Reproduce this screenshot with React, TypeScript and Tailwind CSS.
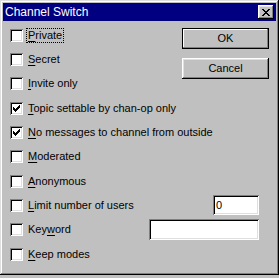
import type { ReactNode } from "react";

const font = { fontFamily: "'Liberation Sans', Arial, sans-serif" };

function U({ children }: { children: ReactNode }) {
  return <span className="underline underline-offset-[2px]">{children}</span>;
}

function Box({ checked }: { checked?: boolean }) {
  return (
    <div className="relative h-[13px] w-[13px] shrink-0 bg-white shadow-[inset_1px_1px_#808080,inset_-1px_-1px_#fff,inset_2px_2px_#000,inset_-2px_-2px_#dfdfdf]">
      {checked && (
        <svg width="7" height="7" viewBox="0 0 7 7" className="absolute left-[3px] top-[3px]" shapeRendering="crispEdges">
          <path d="M0 2h1v3h-1zM1 3h1v3h-1zM2 4h1v3h-1zM3 3h1v3h-1zM4 2h1v3h-1zM5 1h1v3h-1zM6 0h1v3h-1z" fill="#000" />
        </svg>
      )}
    </div>
  );
}

function Row({ checked, children, right, focus }: { checked?: boolean; children: ReactNode; right?: ReactNode; focus?: boolean }) {
  return (
    <div className="flex h-[24.33px] items-center">
      <Box checked={checked} />
      <span className={`ml-[4px] px-px leading-[13px] ${focus ? "outline outline-1 outline-dotted outline-black" : ""}`}>{children}</span>
      {right}
    </div>
  );
}

function Button({ children, def }: { children: ReactNode; def?: boolean }) {
  return (
    <div className={`flex h-[21px] w-[87px] items-center justify-center bg-[#c0c0c0] ${def ? "border border-black shadow-[inset_-1px_-1px_#808080,inset_1px_1px_#fff]" : "shadow-[inset_-1px_-1px_#000,inset_1px_1px_#fff,inset_-2px_-2px_#808080,inset_2px_2px_#dfdfdf]"}`}>
      {children}
    </div>
  );
}

export default function App() {
  return (
    <div className="h-[278px] w-[279px] bg-[#c0c0c0] text-[11px] text-black" style={font}>
      <div className="flex h-[275px] w-[279px] flex-col bg-[#c0c0c0] p-[3px] shadow-[inset_-1px_-1px_#000,inset_1px_1px_#dfdfdf,inset_-2px_-2px_#808080,inset_2px_2px_#fff]">
        <div className="flex h-[18px] items-center justify-between bg-[#000080] pl-[2px] pr-[2px]">
          <span className="text-[12px] text-white">Channel Switch</span>
          <div className="flex h-[14px] w-[16px] items-center justify-center bg-[#c0c0c0] shadow-[inset_-1px_-1px_#000,inset_1px_1px_#fff,inset_-2px_-2px_#808080,inset_2px_2px_#dfdfdf]">
            <svg width="8" height="7" viewBox="0 0 8 7" shapeRendering="crispEdges">
              <path d="M0 0h2v1h-2zM6 0h2v1h-2zM1 1h2v1h-2zM5 1h2v1h-2zM2 2h4v1h-4zM3 3h2v1h-2zM2 4h4v1h-4zM1 5h2v1h-2zM5 5h2v1h-2zM0 6h2v1h-2zM6 6h2v1h-2z" fill="#000" />
            </svg>
          </div>
        </div>
        <div className="mt-[2px] grid grid-cols-[1fr_87px] pl-[7px] pr-[7px]">
          <div className="flex flex-col">
            <Row focus><U>P</U>rivate</Row>
            <Row><U>S</U>ecret</Row>
            <Row><U>I</U>nvite only</Row>
          </div>
          <div className="flex flex-col gap-[9px] pt-[5px]">
            <Button def>OK</Button>
            <Button>Cancel</Button>
          </div>
          <div className="col-span-2 flex flex-col">
            <Row checked><U>T</U>opic settable by chan-op only</Row>
            <Row checked><U>N</U>o messages to channel from outside</Row>
            <Row><U>M</U>oderated</Row>
            <Row><U>A</U>nonymous</Row>
            <Row
              right={
                <div className="ml-auto mr-[10px] flex h-[20px] w-[46px] items-center bg-white pl-[3px] shadow-[inset_1px_1px_#808080,inset_-1px_-1px_#fff,inset_2px_2px_#000,inset_-2px_-2px_#dfdfdf]">
                  0
                </div>
              }
            >
              <U>L</U>imit number of users
            </Row>
            <Row
              right={
                <div className="ml-auto mr-[10px] h-[21px] w-[110px] bg-white shadow-[inset_1px_1px_#808080,inset_-1px_-1px_#fff,inset_2px_2px_#000,inset_-2px_-2px_#dfdfdf]" />
              }
            >
              Key<U>w</U>ord
            </Row>
            <Row><U>K</U>eep modes</Row>
          </div>
        </div>
      </div>
    </div>
  );
}
